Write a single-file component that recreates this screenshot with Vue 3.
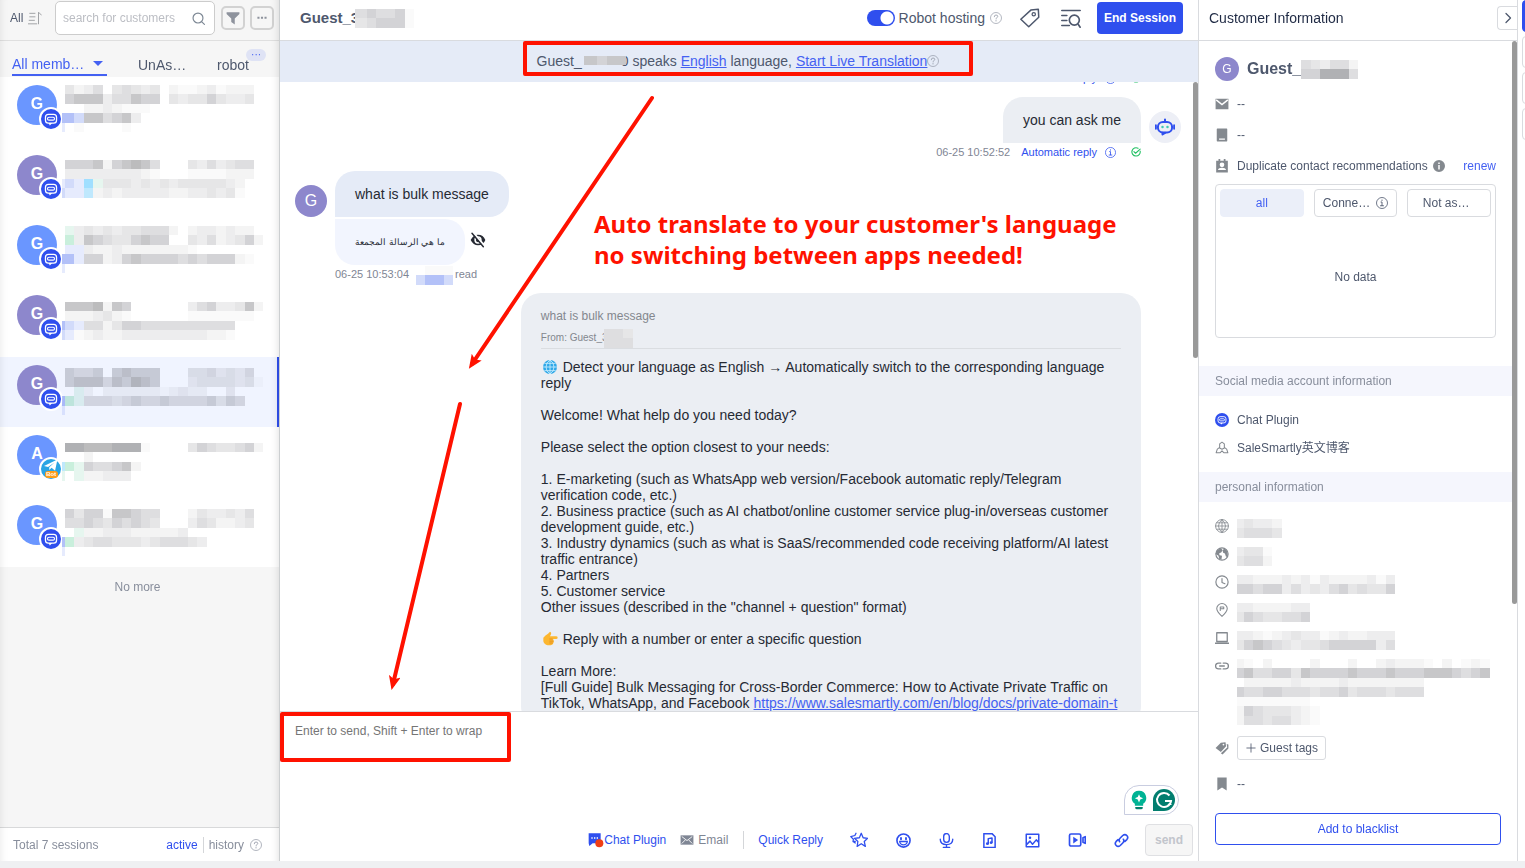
<template>
  <div class="workspace">
    <!-- Session list -->
    <aside class="sidebar">
      <div class="filters">
        <button class="all-btn">All <Icon name="sort" :size="14" /></button>
        <div class="search">
          <input type="text" placeholder="search for customers" aria-label="search for customers" />
          <Icon name="search" :size="14" />
        </div>
        <button class="square-btn" aria-label="Filter"><Icon name="funnel" :size="14" /></button>
        <button class="square-btn" aria-label="More"><Icon name="dots" :size="10" /></button>
      </div>

      <nav class="tabs">
        <button class="tab tab-active">All memb… <span class="caret"></span></button>
        <button class="tab tab-unassigned">UnAs…</button>
        <button class="tab tab-robot">robot<span class="tab-badge">···</span></button>
      </nav>

      <ul class="sessions">
        <li v-for="s in sessions" :key="s.id" class="session" :class="{ selected: s.selected }">
          <div class="avatar" :class="s.color">
            {{ s.letter }}
            <span class="channel" :class="s.channel">
              <Icon :name="s.channel === 'telegram' ? 'plane' : 'chat'" :size="14" />
              <small v-if="s.channel === 'telegram'">Bot</small>
            </span>
          </div>
          <Mosaic class="session-text" :rows="s.rows" :first="3" :top="s.top" />
        </li>
      </ul>
      <p class="no-more">No more</p>

      <div class="sidebar-footer">
        <span>Total 7 sessions</span>
        <div class="footer-links">
          <a href="#" class="blue">active</a>
          <a href="#" class="history">history</a>
          <Icon name="question" :size="12" />
        </div>
      </div>
    </aside>

    <!-- Conversation -->
    <main class="chat">
      <header class="chat-header">
        <h1 class="guest-title">Guest_3<Mosaic class="over" :rows="['565561', '456661']" :first="12" /></h1>
        <div class="chat-actions">
          <label class="hosting"><input type="checkbox" role="switch" checked /> Robot hosting</label>
          <Icon name="question" :size="12" class="help" />
          <button class="icon-btn" aria-label="Tags"><Icon name="tag" :size="20" /></button>
          <button class="icon-btn" aria-label="Search history"><Icon name="history" :size="20" /></button>
          <button class="end-btn">End Session</button>
        </div>
      </header>

      <div class="notice">
        <p class="notice-box">
          <span>Guest_</span><Mosaic class="notice-mosaic" :rows="['77677']" :first="4" :top="0" /><span>0 speaks <a href="#">English</a> language, <a href="#">Start Live Translation</a></span>
          <Icon name="question" :size="12" class="faint" />
        </p>
      </div>

      <section class="messages">
        <div class="message-list">
          <div class="meta meta-right">
            <span>06-25 10:52:51</span><a href="#">Automatic reply</a>
            <Icon name="info" :size="11" class="blue" /><Icon name="check" :size="10" class="green" />
          </div>
          <div class="row row-right">
            <div class="bubble bubble-agent">you can ask me</div>
            <span class="robot-avatar"><Icon name="robot" :size="20" /></span>
          </div>
          <div class="meta meta-right">
            <span>06-25 10:52:52</span><a href="#">Automatic reply</a>
            <Icon name="info" :size="11" class="blue" /><Icon name="check" :size="10" class="green" />
          </div>

          <div class="row row-left">
            <span class="guest-avatar">G</span>
            <div class="bubble bubble-guest">what is bulk message</div>
          </div>
          <div class="row translation-row">
            <div class="bubble bubble-translation" dir="rtl" lang="ar">ما هي الرسالة المجمعة</div>
            <Icon name="eyeOff" :size="16" />
          </div>
          <div class="meta meta-left">
            <span>06-25 10:53:04</span><Mosaic :rows="['.111', 'cbbc']" :first="9" :top="2" /><span>read</span>
          </div>

          <article class="bubble-long">
            <p class="quote">what is bulk message</p>
            <p class="quote-from">From: Guest_3<Mosaic class="over" :rows="['554', '555']" :first="10" /></p>
            <div class="answer">
              <p v-for="(l, i) in answer" :key="i">
                <Icon v-if="l.emoji" :name="l.emoji" :size="18" class="emoji" />{{ l.text }}<a v-if="l.link" href="#">{{ l.link }}</a>
              </p>
            </div>
          </article>
        </div>
        <span class="scrollbar"></span>
      </section>

      <section class="composer">
        <textarea placeholder="Enter to send, Shift + Enter to wrap" aria-label="Message"></textarea>
        <div class="composer-mark"></div>
        <div class="assistant">
          <Icon name="bulb" :size="20" />
          <Icon name="grammar" :size="24" />
        </div>
        <div class="toolbar">
          <button class="channel-btn blue"><Icon name="pluginFlag" :size="16" />Chat Plugin</button>
          <button class="channel-btn email-btn"><Icon name="mail" :size="14" />Email</button>
          <span class="divider"></span>
          <button class="quick-btn blue">Quick Reply</button>
          <div class="tools blue">
            <button v-for="t in tools" :key="t.name" :aria-label="t.name"><Icon :name="t.name" :size="t.size" /></button>
          </div>
          <button class="send-btn" disabled>send</button>
        </div>
      </section>

      <!-- Arrows and headline laid over the conversation -->
      <svg class="arrows" width="918" height="868">
        <defs>
          <marker id="arrowhead" markerUnits="userSpaceOnUse" markerWidth="16" markerHeight="14" refX="12" refY="6" orient="auto">
            <path d="M14 6L0 0L3 6L0 12Z" fill="#ff1200" />
          </marker>
        </defs>
        <path d="M372 98L192 364M180 404L113 684" fill="none" stroke="#ff1200" stroke-width="4" stroke-linecap="round" />
        <path d="M372 98L190 367" fill="none" stroke="#ff1200" stroke-width="1" marker-end="url(#arrowhead)" />
        <path d="M180 404L112 688" fill="none" stroke="#ff1200" stroke-width="1" marker-end="url(#arrowhead)" />
      </svg>
      <p class="headline">Auto translate to your customer's language<br />no switching between apps needed!</p>
    </main>

    <!-- Customer details -->
    <aside class="details">
      <header class="details-header">
        <h2>Customer Information</h2>
        <button class="collapse-btn" aria-label="Collapse"><Icon name="chevron" :size="12" /></button>
      </header>
      <div class="details-body">
        <div class="profile">
          <span class="profile-avatar">G</span>
          <strong>Guest_</strong><Mosaic :rows="['543552', '669995']" :first="10" />
        </div>
        <div class="contact">
          <div class="info-row tall"><Icon name="mailSolid" :size="14" /><span>--</span></div>
          <div class="info-row tall"><Icon name="phone" :size="14" /><span>--</span></div>
          <div class="info-row tall">
            <Icon name="contact" :size="14" /><span>Duplicate contact recommendations</span>
            <Icon name="infoSolid" :size="12" class="dup-info" /><a href="#" class="renew">renew</a>
          </div>
        </div>
        <div class="duplicates">
          <div class="dup-tabs">
            <button class="dup-active">all</button>
            <button>Conne… <Icon name="info" :size="12" /></button>
            <button class="dup-last">Not as…</button>
          </div>
          <p>No data</p>
        </div>

        <h3>Social media account information</h3>
        <div class="group">
          <div class="info-row"><span class="plugin-dot"><Icon name="chat" :size="10" /></span><span>Chat Plugin</span></div>
          <div class="info-row"><Icon name="cubes" :size="14" /><span>SaleSmartly英文博客</span></div>
        </div>

        <h3>personal information</h3>
        <div class="group personal">
          <div v-for="p in personal" :key="p.icon" class="info-row">
            <Icon :name="p.icon" :size="14" /><Mosaic :rows="p.rows" :first="7" />
          </div>
          <div class="info-row tags-row">
            <Icon name="tags" :size="14" /><button class="tags-btn"><Icon name="plus" :size="10" />Guest tags</button>
          </div>
          <div class="info-row tags-row"><Icon name="bookmark" :size="14" /><span>--</span></div>
        </div>
        <button class="blacklist-btn">Add to blacklist</button>
        <span class="scrollbar"></span>
      </div>
    </aside>

    <div class="rail">
      <span class="rail-item rail-active"></span>
      <span class="rail-item"></span>
      <span class="rail-item"></span>
      <span class="rail-item"></span>
    </div>
  </div>
</template>

<script setup>
import { h } from 'vue';

// --- ICONS (24 x 24 grid) ---
const line = (d, w = 2) => `<path d="${d}" fill="none" stroke="currentColor" stroke-width="${w}" stroke-linecap="round" stroke-linejoin="round"/>`;
const solid = (d) => `<path d="${d}" fill="currentColor" fill-rule="evenodd"/>`;
const ring = (r, w = 2) => `<circle cx="12" cy="12" r="${r}" fill="none" stroke="currentColor" stroke-width="${w}"/>`;
const box = (x, y, w, hgt, r, s) => `<rect x="${x}" y="${y}" width="${w}" height="${hgt}" rx="${r}" fill="none" stroke="currentColor" stroke-width="${s}"/>`;

const icons = {
  sort: line('M3 4h9M3 10h9M2 16h9M0 22h15M18 22V2l5 5', 1.7),
  search: ring(8.5, 2) + line('M18.5 18.5L23 23', 2),
  funnel: solid('M1 2h22v3l-8 8v10l-6-4v-6L1 5z'),
  dots: solid('M1 9h5v5H1zM9.500 9h5v5h-5zM18 9h5v5h-5z'),
  chat: box(2.5, 4, 19, 15, 5, 2.2) + box(6, 9, 12, 5, 2.5, 2) + solid('M8 19h6l-4 4z'),
  plane: solid('M0 12L23 1l-4 19-6-5-4 4v-5l9-8L7 13.500z'),
  question: ring(11, 1.3) + line('M8.500 9.500q0-3.500 3.500-3.500t3.500 3q0 1.500-2 2.500t-1.500 2.500M12 17v1', 1.5),
  info: ring(11, 1.6) + line('M12 6v1M10 10h2v7M9 17.500h6', 1.8),
  infoSolid: solid('M12 0a12 12 0 1 0 0 24a12 12 0 0 0 0-24zM10.500 5h3v3h-3zM10.500 10h3v9h-3z'),
  check: line('M22 10a10 10 0 1 1-5-7M7 11l4 4L22 5', 2.6),
  tag: line('M1 13.500L13 2.500L22 1.500L22.500 11L10.500 22.500Z', 1.8) + '<circle cx="16.500" cy="7.500" r="2" fill="none" stroke="currentColor" stroke-width="1.5"/>',
  history: line('M1 3h22M1 9h6M1 15h6M1 21h9M21 20l2 3', 2) + '<circle cx="16" cy="14.500" r="6" fill="none" stroke="currentColor" stroke-width="2"/>',
  robot: box(3.5, 6, 17, 12.5, 6, 2.4) + line('M12 3v3M1 10v4M23 10v4M9 19v2l3-2', 2.4) + '<circle cx="9" cy="12" r="1.500" fill="#3fc8b4"/><circle cx="15" cy="12" r="1.500" fill="#3fc8b4"/>',
  eyeOff: solid('M1 12Q5 4 12 4q8 0 11 8q-3 8-11 8Q5 20 1 12zM12 6.500a5.500 5.500 0 1 0 0 11a5.500 5.500 0 0 0 0-11z') + '<circle cx="12" cy="12" r="3.200" fill="currentColor"/><path d="M5 1l17 20" stroke="#fff" stroke-width="3"/>' + line('M3 2l17 20', 2.2),
  bulb: '<path d="M12 1a8.500 8.500 0 0 0-5 15.500V19h10v-2.500A8.500 8.500 0 0 0 12 1z" fill="#00b394"/><path d="M12 5l1.500 3.500L17 10l-3.500 1.500L12 15l-1.500-3.500L7 10l3.500-1.500z" fill="#fff"/><path d="M7.500 20.500h9v1q0 1.500-2 1.500h-5q-2 0-2-1.500z" fill="#00806c"/>',
  grammar: '<path d="M12 1a11 11 0 0 1 0 22H1V12A11 11 0 0 1 12 1z" fill="#027e6f"/><path d="M17.500 7.500A7 7 0 1 0 19 13h-6M18.500 13v4" fill="none" stroke="#fff" stroke-width="2"/>',
  pluginFlag: solid('M1 2h18v15H7l-5 4-1-4z') + '<path d="M5 9h2M9 9h2M13 9h2" stroke="#fff" stroke-width="2"/><circle cx="17" cy="17" r="6" fill="#f03e14"/>',
  mail: solid('M1 4h22v16H1z') + '<path d="M3 6l9 7 9-7M3 18l6-6M21 18l-6-6" fill="none" stroke="#fff" stroke-width="1.500"/>',
  mailSolid: solid('M1 3h22v18H1z') + '<path d="M2 5l10 8L22 5" fill="none" stroke="#fff" stroke-width="2.500"/>',
  star: line('M15 3l2.500 6 6 .700-4.500 4.300 1.500 6.500-5.500-3.500-5.500 3.500 1-6.500L6 9.700l6.500-.700zM8 3L6.500 6 1 7.500l3.500 3.500L4 14l3 0M4 14l3 2', 1.7),
  smile: ring(10.500, 2.6) + line('M8 8v2M16 8v2', 3) + '<path d="M6 13.500h12a6 5.500 0 0 1-12 0z" fill="none" stroke="currentColor" stroke-width="2.200"/>',
  mic: line('M12 1a4.500 4.500 0 0 1 4.500 4.500v5a4.500 4.500 0 0 1-9 0v-5A4.500 4.500 0 0 1 12 1zM2 10q0 8.500 10 8.500T22 10M12 19v4M7 23h10', 2.2),
  music: line('M3 1h13l5 5v17H3zM10 17V9l6-1v7', 2.4) + '<circle cx="8.500" cy="17" r="2.200" fill="currentColor"/><circle cx="14.500" cy="15.500" r="2.200" fill="currentColor"/>',
  image: line('M2 2h20v20H2zM2 19l6-6 4 5 6-7 4 4', 2.4) + '<circle cx="8" cy="7.500" r="2" fill="currentColor"/>',
  video: box(2, 4, 15, 16, 2, 2.2) + line('M20 9l3-1.500v9L20 15z', 2.2) + solid('M7 7.500l6.500 4.500L7 16.500z'),
  clip: line('M9 14q-2-3 1-6l4-4q3.500-3 6.500 0t0 6.500l-3 3M15 10q2 3-1 6l-4 4q-3.500 3-6.500 0t0-6.500l3-3', 2.6),
  chevron: line('M8 3l9 9-9 9', 2.6),
  phone: solid('M4 1q-1 0-1 1v20q0 1 1 1h16q1 0 1-1V2q0-1-1-1zM7 18h10v2H7z'),
  contact: solid('M2 3h4V0h3v3h6V0h3v3h4v20H2zM12 6a4 4 0 1 0 0 8a4 4 0 0 0 0-8zM5 19h14q-1-4-7-4t-7 4z'),
  cubes: line('M8 12V5l4-3 4 3v7M8 11l-4 3-2 6h7l3-3 3 3h7l-2-6-4-3M8 12l4 2 4-2', 1.8),
  globe: ring(11, 1.5) + line('M1 12h22M3 6.500h18M3 17.500h18M12 1v22M12 1q-6 5-6 11t6 11q6-5 6-11T12 1', 1.4),
  earth: ring(10.500, 2) + solid('M3 6l7-4 3 3-2 4-4 2 1 3 4 1-1 7-4-2-1-5-5-3zM16 2l5 5 1 8-3 2-2-6-3-1-1-4z'),
  clock: ring(10.500, 2) + line('M12 6v7l5 2', 2),
  pin: line('M12 23Q3 15 3 9.500a9 8.500 0 0 1 18 0Q21 15 12 23z', 1.8) + line('M9 13V7h6v3H9', 1.8),
  laptop: line('M3 3h18v15H3zM0 21h24', 2.2),
  link: line('M10 7H6a5 5 0 0 0 0 10h4M14 7h4a5 5 0 0 1 0 10h-4M8 12h8', 2.2),
  tags: solid('M1 12L10 3l8-1 1 7-9 10zM20 5l3 1v7L13 23l-3-2 11-10zM14.500 4.500a1.500 1.500 0 1 0 0 3a1.500 1.500 0 0 0 0-3z'),
  bookmark: solid('M4 1h16v22l-8-5-8 5z'),
  plus: line('M12 2v20M2 12h20', 2),
  globeEmoji: '<circle cx="12" cy="12" r="10.500" fill="#2fa8e8"/><path d="M12 1.500v21M1.500 12h21M3.500 6.500h17M3.500 17.500h17M12 1.500q-6 4-6 10.500t6 10.500q6-4 6-10.500T12 1.500" fill="none" stroke="#d4f2ff" stroke-width="1.200"/>',
  handEmoji: '<path d="M2 10q3-4 7-6l3-3q3 1 1 5l-1 2h9q2.500 0 2.500 2t-2.500 2h-5q2 1 1.500 2.500 1 2-.500 3 0 2.500-2 3-4 2-9 0-4-2-4-5z" fill="#fcb62f"/><path d="M11 12h5M11 15.200h6M11 18h5" stroke="#e08a1e" stroke-width="1.200"/>',
};

const Icon = (props) => h('svg', { class: 'icon', viewBox: '0 0 24 24', width: props.size, height: props.size, 'aria-hidden': 'true', innerHTML: icons[props.name] });
Icon.props = ['name', 'size'];

// --- PIXELATED PLACEHOLDERS ---
// every character of a row is one cell, looked up in this palette
const palette = {
  1: '#fafafa', 2: '#f4f4f4', 3: '#ededee', 4: '#e6e6e7', 5: '#dedee0', 6: '#d3d3d6', 7: '#c7c7c9', 8: '#bcbcbd', 9: '#b0b1b4',
  b: '#b3c1f8', c: '#d2dbfa', d: '#e6ebfd', s: '#a0dfff', t: '#bfe8fd', g: '#c9efdc', h: '#e6f6ef',
};
const CELL = 9.45;

const Mosaic = (props) => {
  const first = props.first;
  const top = props.top || 0;
  const edge = (i) => (i === 0 ? 0 : Math.round(first + (i - 1) * CELL));
  const cols = Math.max(...props.rows.map((r) => r.length));
  const rects = [];
  props.rows.forEach((row, r) => {
    const y = top + Math.round(r * CELL);
    const height = Math.round((r + 1) * CELL) - Math.round(r * CELL);
    [...row].forEach((c, i) => {
      if (palette[c]) rects.push(h('rect', { x: edge(i), y, width: edge(i + 1) - edge(i), height, fill: palette[c] }));
    });
  });
  return h('svg', { class: 'mosaic', width: edge(cols), height: top + Math.round(props.rows.length * CELL), 'aria-hidden': 'true' }, rects);
};
Mosaic.props = ['rows', 'first', 'top'];

// --- DATA ---
const sessions = [
  { id: 1, letter: 'G', color: 'azure', channel: 'plugin', top: 8, rows: ['.4235.45434.211231222', '.6777355766.434464334', '...2232111', 'bbc775673', 'd.1....1'] },
  { id: 2, letter: 'G', color: 'violet', channel: 'plugin', top: 13, rows: ['.6667267875...4353455', '.3333333321...1111222', 'dcdsh444343434444432', 'cddt2323333322334341'] },
  { id: 3, letter: 'G', color: 'azure', channel: 'plugin', top: 9, rows: ['.h34343445552.2332322', '.g3765446766..43523462', '.dd322322222221', 'bbd662367666656566621', 'd'] },
  { id: 4, letter: 'G', color: 'violet', channel: 'plugin', top: 15, rows: ['.7778276......35633472', '.2223421......1111111', 'bcd5524665555555555', 'cd12322333333333221'] },
  { id: 5, letter: 'G', color: 'violet', channel: 'plugin', selected: true, top: 11, rows: ['.6556.67666...4453435', '.6777576876...34444341', '..h2.22222212322..3', 'bgh55545655655556465', 'd'] },
  { id: 6, letter: 'A', color: 'azure', channel: 'telegram', top: 16, rows: ['.998889991....46544562', '...2', 'tgh655672', 'h.h22333'] },
  { id: 7, letter: 'G', color: 'azure', channel: 'plugin', top: 12, rows: ['.6466177655...2433435', '.5565465654...3542234', '..h22333222223', 'bg34554443455543', 'd'] },
];

const answer = [
  { emoji: 'globeEmoji', text: ' Detect your language as English → Automatically switch to the corresponding language reply' },
  {},
  { text: 'Welcome! What help do you need today?' },
  {},
  { text: 'Please select the option closest to your needs:' },
  {},
  { text: '1. E-marketing (such as WhatsApp web version/Facebook automatic reply/Telegram verification code, etc.)' },
  { text: '2. Business practice (such as AI chatbot/online customer service plug-in/overseas customer development guide, etc.)' },
  { text: '3. Industry dynamics (such as what is SaaS/recommended code receiving platform/AI latest traffic entrance)' },
  { text: '4. Partners' },
  { text: '5. Customer service' },
  { text: 'Other issues (described in the "channel + question" format)' },
  {},
  { emoji: 'handEmoji', text: ' Reply with a number or enter a specific question' },
  {},
  { text: 'Learn More:' },
  {
    text: '[Full Guide] Bulk Messaging for Cross-Border Commerce: How to Activate Private Traffic on TikTok, WhatsApp, and Facebook ',
    link: 'https://www.salesmartly.com/en/blog/docs/private-domain-t',
  },
];

const tools = [
  { name: 'star', size: 18 },
  { name: 'smile', size: 15 },
  { name: 'mic', size: 15 },
  { name: 'music', size: 15 },
  { name: 'image', size: 15 },
  { name: 'video', size: 18 },
  { name: 'clip', size: 15 },
];

const personal = [
  { icon: 'globe', rows: ['34332', '45554'] },
  { icon: 'earth', rows: ['3441', '4552'] },
  { icon: 'clock', rows: ['33222323132222313', '66566353435645446'] },
  { icon: 'pin', rows: ['33222233', '46544556'] },
  { icon: 'laptop', rows: ['33212343312322333', '46765434456666635'] },
  { icon: 'link', rows: ['21.2....2...2..232221.2.121', '675566476666766676667776567', '.2222232222322222222', '65566555455645554555', '11111111', '265444321', '255455321'] },
];
</script>

<style>
html, body { margin: 0; background: #eff0f2; }
.icon, .mosaic { display: block; flex: none; }
.mosaic { shape-rendering: crispEdges; }
</style>

<style scoped>
* { box-sizing: border-box; }
.workspace {
  display: grid;
  grid-template-columns: 280px minmax(0, 1fr) 320px 7px;
  grid-template-rows: minmax(0, 1fr);
  height: 100vh;
  padding-bottom: 7px;
  overflow: hidden;
  background: #eff0f2;
  color: #4e586d;
  font-family: "Liberation Sans", "Noto Sans CJK SC", Arial, sans-serif;
  font-size: 12px;
  line-height: 16px;
}
p, h1, h2, h3, ul { margin: 0; padding: 0; font-weight: normal; }
button { border: 0; padding: 0; background: none; color: inherit; font: inherit; cursor: pointer; }
a { color: #4461f2; text-decoration: none; }
.blue { color: #2f4fee; }
.green { color: #21c063; }
.faint { color: #8c93a0; }

/* --- SIDEBAR --- */
.sidebar {
  position: relative;
  display: flex;
  flex-direction: column;
  border-right: 1px solid #cccfd1;
  background: #f6f6f6;
}
.sidebar::after {
  content: "";
  position: absolute;
  inset: 0;
  box-shadow: inset 8px 0 8px -8px rgba(0, 0, 0, 0.1), inset -8px 0 8px -8px rgba(0, 0, 0, 0.14);
  pointer-events: none;
}
.filters {
  display: flex;
  align-items: center;
  flex: none;
  height: 41px;
  padding: 0 5px 5px 10px;
  border-bottom: 1px solid #dfdfdf;
}
.all-btn { display: flex; align-items: center; flex: none; gap: 5px; width: 45px; }
.all-btn .icon { color: #a0a2a5; }
.search {
  display: flex;
  align-items: center;
  flex: 1;
  min-width: 0;
  height: 34px;
  margin-right: 6px;
  padding: 0 9px 0 7px;
  border: 1px solid #ccc;
  border-radius: 5px;
  background: #fff;
}
.search input { flex: 1; min-width: 0; padding: 0; border: 0; outline: 0; background: none; font: inherit; }
.search input::placeholder { color: #bcbec4; opacity: 1; }
.search .icon { color: #7c8794; }
.square-btn {
  display: flex;
  align-items: center;
  justify-content: center;
  flex: none;
  width: 24px;
  height: 24px;
  border: 2px solid #d2d2d2;
  border-radius: 5px;
  color: #8e939d;
}
.square-btn + .square-btn { margin-left: 5px; }
.tabs { display: flex; flex: none; height: 36px; padding: 12px 12px 1px; font-size: 14px; line-height: 18px; }
.tab { position: relative; display: flex; align-items: center; }
.tab-active { justify-content: space-between; width: 95px; padding-right: 4px; border-bottom: 2px solid #4461f2; color: #4461f2; }
.caret { border: 5px solid transparent; border-top-color: #4461f2; border-bottom: 0; }
.tab-unassigned { margin-left: 31px; }
.tab-robot { margin-left: auto; margin-right: 18px; }
.tab-badge {
  position: absolute;
  left: 29px;
  top: -4px;
  width: 20px;
  height: 12px;
  border-radius: 6px;
  background: #dfe3f5;
  color: #4461f2;
  font-size: 10px;
  line-height: 12px;
  text-align: center;
}
.sessions { list-style: none; background: #fff; }
.session { display: flex; height: 70px; padding-left: 17px; }
.session.selected { border-right: 2px solid #2f4fee; background: #f0f4ff; }
.session-text { margin-left: 5px; mix-blend-mode: multiply; }
.avatar {
  position: relative;
  width: 40px;
  height: 40px;
  margin-top: 8px;
  border-radius: 50%;
  color: #fff;
  font-size: 16px;
  font-weight: bold;
  line-height: 38px;
  text-align: center;
}
.azure { background: #6a96ff; }
.violet { background: #8d87cc; }
.channel {
  position: absolute;
  left: 22px;
  top: 22px;
  display: flex;
  align-items: center;
  justify-content: center;
  width: 24px;
  height: 24px;
  border: 2px solid #fff;
  border-radius: 50%;
  background: #2f4fee;
}
.channel.telegram { align-items: flex-start; background: #29a4e4; }
.channel small {
  position: absolute;
  bottom: 1px;
  width: 13px;
  height: 7px;
  border-radius: 3px;
  background: #ff9d17;
  font-size: 6px;
  line-height: 7px;
}
.no-more { padding-top: 12px; padding-right: 4px; color: #888e9c; text-align: center; }
.sidebar-footer {
  display: flex;
  align-items: center;
  justify-content: space-between;
  height: 34px;
  margin-top: auto;
  padding: 0 17px 0 13px;
  border-top: 1px solid #d8d9da;
  background: #fff;
  color: #888e9c;
}
.footer-links { display: flex; align-items: center; }
.history { margin: 0 6px 0 5px; padding-left: 5px; border-left: 1px solid #d4d6d9; color: #888e9c; }

/* --- CHAT --- */
.chat { position: relative; display: flex; flex-direction: column; min-width: 0; background: #fff; }
.chat-header {
  display: flex;
  align-items: center;
  justify-content: space-between;
  flex: none;
  height: 41px;
  padding: 0 15px 4px 20px;
  border-bottom: 1px solid #d9dbdf;
}
.guest-title { display: flex; align-items: center; font-size: 15px; font-weight: bold; }
.over { position: relative; margin-left: -4px; }
.chat-actions { display: flex; align-items: center; font-size: 14px; }
.hosting { display: flex; align-items: center; gap: 4px; }
.hosting input {
  appearance: none;
  width: 28px;
  height: 16px;
  margin: 0;
  border-radius: 8px;
  background: radial-gradient(circle at 20px 8px, #fff 6px, #2f4fee 7px);
}
.help { margin: 0 18px 0 5px; color: #8c93a0; }
.icon-btn { width: 20px; margin-right: 21px; }
.icon-btn + .end-btn { margin-left: -5px; }
.end-btn { width: 86px; height: 32px; border-radius: 4px; background: #2f4fee; color: #fff; font-size: 12px; font-weight: bold; }
.notice { display: flex; flex: none; justify-content: center; height: 41px; background: #e5ebf7; font-size: 14px; }
.notice-box {
  display: flex;
  align-items: center;
  align-self: flex-start;
  height: 35px;
  margin-left: 18px;
  padding: 4px 30px 0 10px;
  border: 4px solid #ff1200;
  border-radius: 2px;
  white-space: nowrap;
}
.notice-box a { text-decoration: underline; }
.notice-mosaic { position: relative; margin: 0 -5px 0 2px; }
.messages { position: relative; flex: 1; min-height: 0; overflow: hidden; }
.message-list { margin-top: -12px; padding: 0 17px 0 15px; }
.scrollbar { position: absolute; right: 0; top: 0; width: 5px; height: 276px; border-radius: 3px; background: #999; }
.meta { display: flex; align-items: center; height: 16px; margin: 1px 0 11px; color: #7f8694; font-size: 11px; }
.meta:first-child { margin-top: 0; }
.meta-right { justify-content: flex-end; padding-right: 40px; }
.meta-right a { margin: 0 8px 0 11px; color: #2f4fee; }
.meta-right .green { margin-left: 15px; }
.meta-left { padding-left: 40px; }
.meta-left .mosaic { margin: 0 2px 0 7px; }
.row { display: flex; align-items: flex-end; gap: 8px; }
.row-right { justify-content: flex-end; }
.bubble { padding: 15px 20px; border-radius: 20px; color: #262a33; font-size: 14px; }
.bubble-agent { border-radius: 20px 20px 0 0; background: #ebeef3; }
.bubble-guest { border-bottom-left-radius: 0; background: #e5ebf7; }
.bubble-translation { border-top-left-radius: 0; background: #f2f5fe; font-size: 9px; }
.translation-row { align-items: center; gap: 5px; margin-top: 2px; padding-left: 40px; color: #262a33; }
.translation-row .icon { margin-bottom: 5px; }
.guest-avatar, .robot-avatar {
  display: flex;
  align-items: center;
  justify-content: center;
  width: 32px;
  height: 32px;
  border-radius: 50%;
  background: #8d87cc;
  color: #fff;
  font-size: 16px;
}
.robot-avatar { background: #edeff6; color: #2f4fee; }
.bubble-long {
  width: 70%;
  margin-left: auto;
  margin-right: 40px;
  padding: 15px 20px;
  border-radius: 20px;
  background: #ebeef3;
  color: #262a33;
}
.quote { color: #83878e; }
.quote-from { display: flex; align-items: center; height: 25px; padding-top: 4px; border-bottom: 1px solid #dadde1; color: #83878e; font-size: 10px; }
.answer { margin-top: 10px; font-size: 14px; }
.answer p { min-height: 16px; }
.answer a { text-decoration: underline; }
.emoji { display: inline-block; height: 16px; vertical-align: top; }
.arrows { position: absolute; left: 0; top: 0; pointer-events: none; }
.headline {
  position: absolute;
  left: 314px;
  top: 208px;
  color: #ff1200;
  font: bold 24px/31px "Noto Sans", sans-serif;
  white-space: nowrap;
}

/* --- COMPOSER --- */
.composer { position: relative; display: flex; flex: none; flex-direction: column; height: 150px; border-top: 1px solid #d9dbdf; }
.composer textarea {
  flex: 1;
  padding: 11px 15px;
  border: 0;
  outline: 0;
  resize: none;
  font: inherit;
}
.composer textarea::placeholder { color: #757575; }
.composer-mark { position: absolute; left: 0; top: 0; width: 231px; height: 50px; border: 4px solid #ff1200; border-radius: 2px; pointer-events: none; }
.assistant {
  position: absolute;
  right: 19px;
  top: 73px;
  display: flex;
  align-items: center;
  gap: 3px;
  height: 30px;
  padding: 0 2px 0 4px;
  border: 1px solid #c9cde0;
  border-radius: 15px 15px 15px 0;
}
.toolbar { display: flex; align-items: center; justify-content: flex-end; height: 32px; margin-bottom: 5px; padding-right: 5px; }
.channel-btn { display: flex; align-items: center; }
.email-btn { gap: 4px; margin-left: 14px; color: #7f8694; }
.divider { width: 1px; height: 18px; margin: 0 14px 0 15px; background: #d4d6d9; }
.tools { display: flex; align-items: center; gap: 28px; margin: 0 16px 0 27px; }
.send-btn { width: 48px; height: 32px; border: 1px solid #dfe0e3; border-radius: 4px; background: #f6f6f6; color: #c2c5cc; font-weight: bold; }

/* --- DETAILS --- */
.details { display: flex; flex-direction: column; border-left: 1px solid #d9dbdf; border-right: 1px solid #d9dbdf; background: #fff; }
.details-header {
  display: flex;
  align-items: center;
  justify-content: space-between;
  flex: none;
  height: 41px;
  padding: 0 0 4px 10px;
  border-bottom: 1px solid #d9dbdf;
}
.details h2 { color: #1f2a44; font-size: 14px; }
.collapse-btn { display: flex; align-items: center; justify-content: center; width: 20px; height: 24px; border: 1px solid #d9dbdf; border-right: 0; border-radius: 4px 0 0 4px; }
.details-body { position: relative; flex: 1; display: flex; flex-direction: column; padding-top: 16px; }
.details-body > * { flex: none; }
.details-body .scrollbar { height: 563px; }
.profile { display: flex; align-items: center; height: 24px; padding-left: 16px; font-size: 16px; }
.profile-avatar { width: 24px; height: 24px; margin-right: 8px; border-radius: 50%; background: #8d87cc; color: #fff; font-size: 12px; line-height: 24px; text-align: center; }
.contact { padding: 7px 21px 3px 16px; }
.info-row { display: flex; align-items: center; gap: 8px; height: 28px; }
.info-row.tall { height: 31px; }
.info-row > .icon { color: #84898f; }
.dup-info { margin-left: -3px; }
.renew { margin-left: auto; }
.duplicates { height: 154px; margin: 0 21px 28px 16px; padding: 4px; border: 1px solid #d9dbdf; border-radius: 4px; text-align: center; }
.dup-tabs { display: grid; grid-template-columns: repeat(3, 1fr); gap: 10px; }
.dup-tabs button { display: flex; align-items: center; justify-content: center; gap: 6px; height: 28px; border: 1px solid #d9dbdf; border-radius: 4px; }
.dup-tabs .dup-active { border-color: #ebeff9; background: #ebeff9; color: #4461f2; }
.dup-tabs .dup-last { padding-right: 6px; }
.duplicates p { padding-top: 52px; }
.details h3 { height: 30px; margin-right: 5px; padding-left: 16px; background: #f5f6fd; color: #888e9c; font-size: 12px; line-height: 30px; }
.group { padding: 10px 16px; }
.plugin-dot { display: flex; align-items: center; justify-content: center; width: 14px; height: 14px; border-radius: 50%; background: #2f4fee; color: #fff; }
.personal { padding-bottom: 0; }
.personal .info-row { align-items: flex-start; padding-top: 7px; }
.personal .info-row:nth-child(6) { height: 80px; }
.personal .info-row.tags-row { align-items: center; height: 32px; padding: 0; }
.personal .tags-row + .tags-row { margin-top: 4px; }
.tags-btn { display: flex; align-items: center; gap: 4px; height: 24px; padding: 0 7px 0 8px; border: 1px solid #d9dbdf; border-radius: 3px; }
.blacklist-btn { height: 32px; margin: auto 16px 16px; border: 1px solid #2f4fee; border-radius: 4px; color: #2f4fee; }

/* --- RAIL --- */
.rail { display: flex; flex-direction: column; gap: 4px; padding-left: 4px; overflow: hidden; background: #fff; }
.rail-item { flex: none; width: 32px; height: 32px; border: 1px solid #d9dbdf; border-radius: 4px; }
.rail-active { border-color: #2f4fee; background: #2f4fee; }
</style>
